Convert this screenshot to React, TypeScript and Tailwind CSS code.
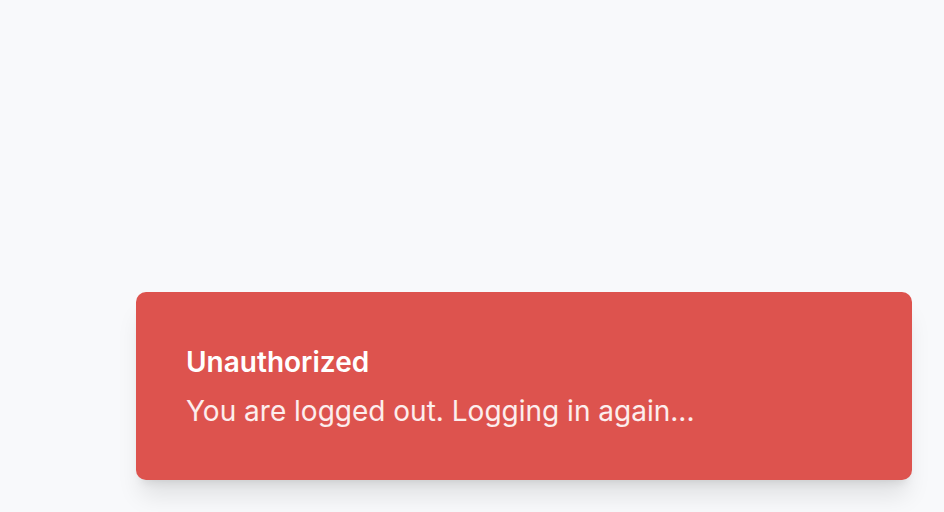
import React from "react";

export default function App() {
  return (
    <div className="w-[944px] h-[512px] bg-[#f8f9fb] relative overflow-hidden" style={{ fontFamily: "Inter, 'Noto Sans', sans-serif" }}>
      <div className="absolute left-[136px] top-[292px] w-[776px] h-[188px] rounded-[10px] bg-[#dd534e] shadow-xl px-[50px] pt-[52px] flex flex-col gap-[13px]">
        <div className="text-white text-[28px] font-semibold leading-[36px]">Unauthorized</div>
        <div className="text-white/90 text-[28px] leading-[36px]">You are logged out. Logging in again...</div>
      </div>
    </div>
  );
}
